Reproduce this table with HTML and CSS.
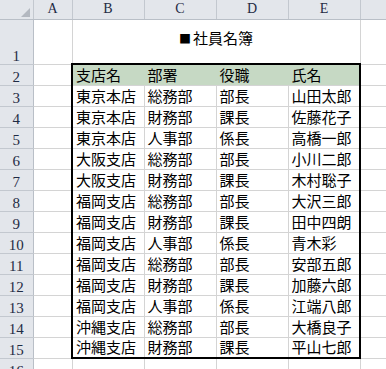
FILE: index.html
```html
<!DOCTYPE html>
<html lang="ja">
<head>
<meta charset="utf-8">
<title>社員名簿</title>
<link rel="stylesheet" href="styles.css">
</head>
<body>
<table class="sheet">
  <colgroup>
    <col class="w-head">
    <col class="w-a">
    <col class="w-col" span="4">
    <col class="w-f">
  </colgroup>
  <thead>
    <tr class="colhead">
      <th class="corner"><svg class="corner-tri" width="9" height="9" viewBox="0 0 9 9"><polygon points="9,0 9,9 0,9" fill="#b3b8c0"/></svg></th>
      <th>A</th><th>B</th><th>C</th><th>D</th><th>E</th><th></th>
    </tr>
  </thead>
  <tbody>
    <tr class="r-title"><th class="rownum">1</th><td></td><td class="title" colspan="4"><span class="mark">■</span>社員名簿</td><td></td></tr>
    <tr class="r rg rg-top"><th class="rownum">2</th><td></td><td>支店名</td><td>部署</td><td>役職</td><td>氏名</td><td></td></tr>
    <tr class="r rg"><th class="rownum">3</th><td></td><td>東京本店</td><td>総務部</td><td>部長</td><td>山田太郎</td><td></td></tr>
    <tr class="r rg"><th class="rownum">4</th><td></td><td>東京本店</td><td>財務部</td><td>課長</td><td>佐藤花子</td><td></td></tr>
    <tr class="r rg"><th class="rownum">5</th><td></td><td>東京本店</td><td>人事部</td><td>係長</td><td>高橋一郎</td><td></td></tr>
    <tr class="r rg"><th class="rownum">6</th><td></td><td>大阪支店</td><td>総務部</td><td>部長</td><td>小川二郎</td><td></td></tr>
    <tr class="r rg"><th class="rownum">7</th><td></td><td>大阪支店</td><td>財務部</td><td>課長</td><td>木村聡子</td><td></td></tr>
    <tr class="r rg"><th class="rownum">8</th><td></td><td>福岡支店</td><td>総務部</td><td>部長</td><td>大沢三郎</td><td></td></tr>
    <tr class="r rg"><th class="rownum">9</th><td></td><td>福岡支店</td><td>財務部</td><td>課長</td><td>田中四朗</td><td></td></tr>
    <tr class="r rg"><th class="rownum">10</th><td></td><td>福岡支店</td><td>人事部</td><td>係長</td><td>青木彩</td><td></td></tr>
    <tr class="r rg"><th class="rownum">11</th><td></td><td>福岡支店</td><td>総務部</td><td>部長</td><td>安部五郎</td><td></td></tr>
    <tr class="r rg"><th class="rownum">12</th><td></td><td>福岡支店</td><td>財務部</td><td>課長</td><td>加藤六郎</td><td></td></tr>
    <tr class="r rg"><th class="rownum">13</th><td></td><td>福岡支店</td><td>人事部</td><td>係長</td><td>江端八郎</td><td></td></tr>
    <tr class="r rg"><th class="rownum">14</th><td></td><td>沖縄支店</td><td>総務部</td><td>部長</td><td>大橋良子</td><td></td></tr>
    <tr class="r rg rg-bot"><th class="rownum">15</th><td></td><td>沖縄支店</td><td>財務部</td><td>課長</td><td>平山七郎</td><td></td></tr>
    <tr class="r"><th class="rownum">16</th><td></td><td></td><td></td><td></td><td></td><td></td></tr>
  </tbody>
</table>
</body>
</html>
```

FILE: styles.css
```css
html, body {
  margin: 0;
  padding: 0;
  background: #ffffff;
}
body {
  width: 386px;
  height: 369px;
  overflow: hidden;
}
.sheet {
  border-collapse: collapse;
  table-layout: fixed;
  width: 400px;
  font-family: "Noto Sans CJK JP", "Noto Sans", sans-serif;
  font-size: 15px;
  color: #000;
}
.w-head { width: 33px; }
.w-a { width: 39px; }
.w-col { width: 72px; }
.w-f { width: 40px; }

.sheet th,
.sheet td {
  padding: 0;
  border: none;
  border-right: 1px solid #d4d4d4;
  border-bottom: 1px solid #d4d4d4;
  white-space: nowrap;
  overflow: hidden;
}

/* row heights */
.colhead { height: 19px; }
.r-title { height: 45px; }
.r { height: 21px; }

/* headers */
.colhead th {
  background: #e3e6eb;
  border-right: 1px solid #c3c8cf;
  border-bottom: 1px solid #b9bfc7;
  font-family: "Liberation Serif", serif;
  font-weight: normal;
  font-size: 14px;
  line-height: 16px;
  color: #1f2b44;
  text-align: center;
  vertical-align: middle;
}
.colhead th.corner {
  text-align: right;
  vertical-align: bottom;
  padding: 0 3px 2px 0;
  line-height: 0;
}
.corner-tri { display: inline-block; }

.sheet .rownum {
  background: #e3e6eb;
  border-right: 1px solid #b9bfc7;
  border-bottom: 1px solid #c3c8cf;
  font-family: "Liberation Serif", serif;
  font-weight: normal;
  font-size: 15px;
  line-height: 14px;
  color: #1f2b44;
  text-align: center;
  vertical-align: bottom;
  padding: 0 0 1px 0;
}

.sheet td {
  line-height: 18px;
  vertical-align: middle;
  padding: 0 3px;
}
.sheet td.title {
  text-align: center;
  padding: 0 0 5px 0;
}
.mark {
  font-size: 12px;
  margin-right: 2px;
}

/* bordered range B2:E15 */
.rg td:nth-child(3) { border-left: 2px solid #000; }
.rg td:nth-child(6) { border-right: 2px solid #000; }
.rg-top td:nth-child(n+3):nth-child(-n+6) {
  border-top: 2px solid #000;
  background: #c6d9c4;
}
.rg-top td:nth-child(n+3):nth-child(-n+5) { border-right-color: #c6d9c4; }
.rg-bot td:nth-child(n+3):nth-child(-n+6) { border-bottom: 2px solid #000; }
```
